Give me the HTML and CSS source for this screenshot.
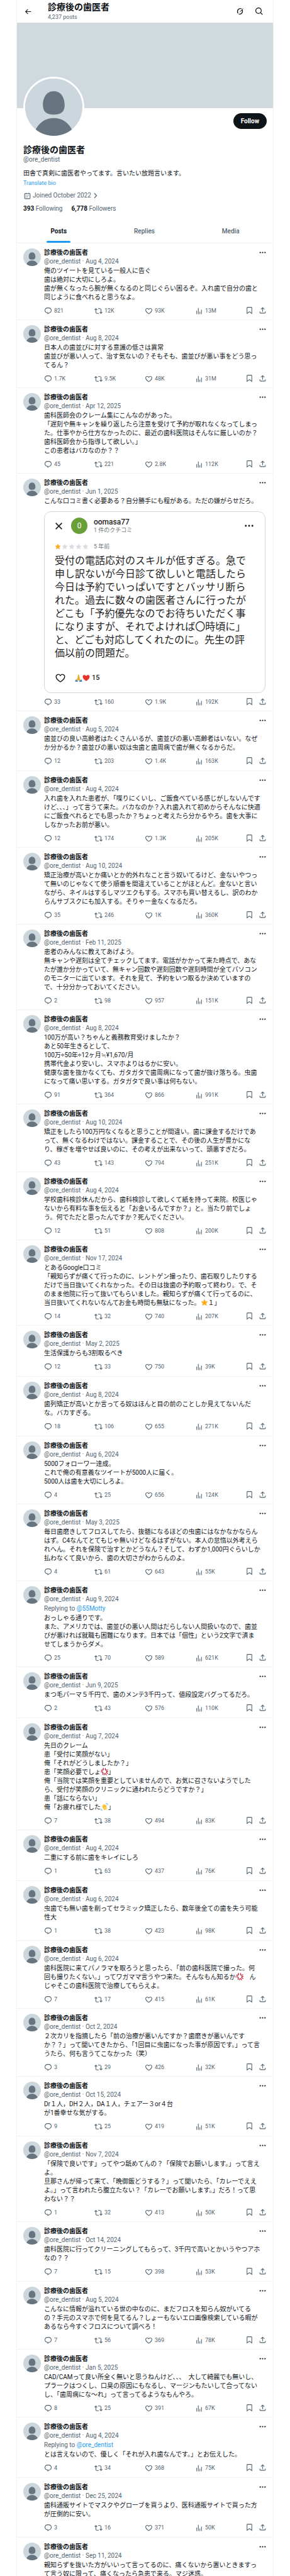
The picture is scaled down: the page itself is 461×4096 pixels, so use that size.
FILE: index.html
```
<!DOCTYPE html>
<html lang="ja">
<head>
    <meta charset="UTF-8">
    <meta name="viewport" content="width=device-width, initial-scale=1.0">
    <title>診療後の歯医者 (@ore_dentist)</title>
    <link rel="stylesheet" href="styles.css">
</head>
<body>
    <!-- Shared icons -->
    <svg class="sprite" aria-hidden="true">
        <symbol id="back" viewBox="0 0 24 24"><path d="M7.414 13l5.043 5.04-1.414 1.42L3.586 12l7.457-7.46 1.414 1.42L7.414 11H21v2H7.414z"/></symbol>
        <symbol id="grok" viewBox="0 0 24 24"><path d="M5.2 18.6C2.5 15.300 2.400 10.300 5 7C7.800 3.300 12.800 2.500 16.600 4.600L15 6.200C12.200 5 8.900 5.800 7 8.300C5.200 10.700 5.100 13.900 6.600 16.400C5.600 18.300 4 20.500 1 22.800C2.700 21.200 3.900 20 5.200 18.600zM8.800 14.900L18.200 7.600C19.900 11.300 19.200 15.800 16.200 18.500C13.600 20.900 10 21.300 7.200 20L8.600 18.400C10.700 19 13.100 18.500 14.800 16.800C16.700 14.900 17.300 12.200 16.700 9.900zM8.600 15.200L22.500 1.200C20.500 4 19 5.700 18 8z"/></symbol>
        <symbol id="search" viewBox="0 0 24 24"><path d="M10.250 3.750c-3.590 0-6.500 2.910-6.500 6.500s2.910 6.500 6.500 6.500c1.795 0 3.419-.726 4.596-1.904 1.178-1.177 1.904-2.801 1.904-4.596 0-3.590-2.910-6.500-6.500-6.500zm-8.500 6.500c0-4.694 3.806-8.500 8.500-8.500s8.500 3.806 8.500 8.500c0 1.986-.682 3.815-1.824 5.262l4.781 4.781-1.414 1.414-4.781-4.781c-1.447 1.142-3.276 1.824-5.262 1.824-4.694 0-8.500-3.806-8.500-8.500z"/></symbol>
        <symbol id="calendar" viewBox="0 0 24 24"><path d="M7 4V3h2v1h6V3h2v1h1.500C19.890 4 21 5.120 21 6.500v12c0 1.380-1.110 2.500-2.500 2.500h-13C4.120 21 3 19.880 3 18.500v-12C3 5.120 4.120 4 5.500 4H7zm0 2H5.500c-.27 0-.5.22-.5.5v12c0 .28.23.5.5.5h13c.28 0 .5-.22.5-.5v-12c0-.28-.22-.5-.5-.5H17v1h-2V6H9v1H7V6zm0 6h2v-2H7v2zm0 4h2v-2H7v2zm4-4h2v-2h-2v2zm0 4h2v-2h-2v2zm4-4h2v-2h-2v2z"/></symbol>
        <symbol id="chevron" viewBox="0 0 12 24"><path d="M2 4.500L9 12l-7 7.500" fill="none" stroke="currentColor" stroke-width="2.400"/></symbol>
        <symbol id="more" viewBox="0 0 24 24"><path d="M3 12c0-1.100.9-2 2-2s2 .9 2 2-.9 2-2 2-2-.9-2-2zm9 2c1.100 0 2-.9 2-2s-.9-2-2-2-2 .9-2 2 .9 2 2 2zm7 0c1.100 0 2-.9 2-2s-.9-2-2-2-2 .9-2 2 .9 2 2 2z"/></symbol>
        <symbol id="reply" viewBox="0 0 24 24"><path d="M1.751 10c0-4.420 3.584-8 8.005-8h4.366c4.490 0 8.129 3.640 8.129 8.130 0 2.960-1.607 5.680-4.196 7.110l-8.054 4.460v-3.690h-.067c-4.490.1-8.183-3.510-8.183-8.010zm8.005-6c-3.317 0-6.005 2.690-6.005 6 0 3.370 2.770 6.080 6.138 6.010l.351-.01h1.761v2.300l5.087-2.810c1.951-1.080 3.163-3.130 3.163-5.360 0-3.390-2.744-6.130-6.129-6.130H9.756z"/></symbol>
        <symbol id="repost" viewBox="0 0 24 24"><path d="M4.500 3.880l4.432 4.140-1.364 1.460L5.500 7.550V16c0 1.100.896 2 2 2H13v2H7.500c-2.209 0-4-1.790-4-4V7.550L1.432 9.480.068 8.020 4.500 3.880zM16.500 6H11V4h5.500c2.209 0 4 1.790 4 4v8.450l2.068-1.930 1.364 1.460-4.432 4.140-4.432-4.140 1.364-1.460 2.068 1.930V8c0-1.100-.896-2-2-2z"/></symbol>
        <symbol id="like" viewBox="0 0 24 24"><path d="M16.697 5.500c-1.222-.06-2.679.51-3.890 2.160l-.805 1.090-.806-1.090C9.984 6.010 8.526 5.440 7.304 5.500c-1.243.07-2.349.78-2.910 1.910-.552 1.120-.633 2.780.479 4.820 1.074 1.970 3.257 4.270 7.129 6.610 3.870-2.340 6.052-4.640 7.126-6.610 1.111-2.040 1.030-3.700.477-4.820-.561-1.130-1.666-1.840-2.908-1.910zm4.187 7.690c-1.351 2.480-4.001 5.120-8.379 7.670l-.503.3-.504-.3c-4.379-2.550-7.029-5.190-8.382-7.670-1.360-2.500-1.410-4.860-.514-6.670.887-1.790 2.647-2.910 4.601-3.010 1.651-.09 3.368.56 4.798 2.010 1.429-1.450 3.146-2.100 4.796-2.010 1.954.1 3.714 1.220 4.601 3.010.896 1.810.846 4.170-.514 6.670z"/></symbol>
        <symbol id="views" viewBox="0 0 24 24"><path d="M8.750 21V3h2v18h-2zM18 21V8.500h2V21h-2zM4 21l.004-10h2L6 21H4zm9.248 0v-7h2v7h-2z"/></symbol>
        <symbol id="bookmark" viewBox="0 0 24 24"><path d="M4 4.500C4 3.120 5.119 2 6.500 2h11C18.881 2 20 3.120 20 4.500v18.440l-8-5.710-8 5.710V4.500zM6.500 4c-.276 0-.5.22-.5.5v14.560l6-4.290 6 4.290V4.500c0-.28-.224-.5-.5-.5h-11z"/></symbol>
        <symbol id="share" viewBox="0 0 24 24"><path d="M12 2.590l5.700 5.700-1.410 1.420L13 6.410V16h-2V6.410l-3.300 3.300-1.410-1.420L12 2.590zM21 15l-.02 3.510c0 1.380-1.120 2.490-2.500 2.490H5.500C4.110 21 3 19.880 3 18.500V15h2v3.500c0 .28.22.5.5.5h12.980c.28 0 .5-.22.5-.5L19 15h2z"/></symbol>
        <symbol id="close" viewBox="0 0 24 24"><path d="M3 3l18 18M21 3L3 21" fill="none" stroke="currentColor" stroke-width="3"/></symbol>
        <symbol id="star" viewBox="0 0 24 24"><path d="M12 1l3.300 7.400 8 .8-6 5.400 1.800 8L12 18.400 4.900 22.600l1.800-8-6-5.400 8-.8z"/></symbol>
        <symbol id="person" viewBox="0 0 100 100">
            <rect width="100" height="100" fill="#ccd6dd"/>
            <path d="M50 22C63 22 69 34 69 46C69 58 63 63 50 63C37 63 31 58 31 46C31 34 37 22 50 22zM17 92C24 76 36 69 50 69C64 69 76 76 83 92V100H17z" fill="#66757f"/>
        </symbol>
        <symbol id="heart" viewBox="0 0 24 24"><path d="M12 22C5 17 1 12.500 1 7.800C1 1.500 9 .5 12 6C15 .5 23 1.500 23 7.800C23 12.500 19 17 12 22z" fill="#e8352c"/></symbol>
        <symbol id="pray" viewBox="0 0 24 24">
            <path d="M11.500 1C13 1 13.600 3 14 6L16 14L19 18L14 22L12 19L9 22L4 18L8 12L10 4C10.300 2 10.500 1 11.500 1z" fill="#f5b93c"/>
            <path d="M12 2V19" stroke="#c98316" stroke-width="1.200"/>
            <path d="M2 17L9 21V24H1zM22 17L14 21V24H23z" fill="#3d85c6"/>
        </symbol>
        <symbol id="anger" viewBox="0 0 24 24"><path d="M8 1.500C9.500 5 8.500 8 2 7.500M1.500 12.500C6 11 9 14 7 21M15 2C14 6 16 9.500 22 6M11.500 22C12.500 16 15 16.500 18 22.500M22.500 11C17 11.500 16 14 22.500 18" fill="none" stroke="#be1931" stroke-width="2.600" stroke-linecap="round"/></symbol>
        <symbol id="wave" viewBox="0 0 24 24">
            <path d="M4.500 9C4.500 7 6.500 7 7.500 8.500L7 5C7 3 9.500 3 10 5L11 4C12 2.500 14 3.500 14 5L15.500 8C16 6 19 6 18.500 9L19.500 15C20 19 17 22 13 22C9 22 7 18 4.500 9z" fill="#ffcc4d"/>
            <path d="M8 9l3 5M11 6l3 6M14 6l2 5" stroke="#e0912f" stroke-width="1" fill="none"/>
            <path d="M16 1.500C19 1.500 21 3.500 21.500 6.500M18.500 .8C21.500 1.200 23 3 23.300 5M1 17C1.500 20 3.500 22 6.500 22.500M.8 20C1.200 22 2.500 23.300 4.500 23.500" stroke="#5dadec" stroke-width="1.500" fill="none"/>
        </symbol>
    </svg>

    <main class="page">
        <header class="topbar">
            <button type="button" class="icon-btn" aria-label="Back"><svg class="icon"><use href="#back"/></svg></button>
            <div class="topbar-title">
                <h1>診療後の歯医者</h1>
                <p>4,237 posts</p>
            </div>
            <button type="button" class="icon-btn" aria-label="Profile summary"><svg class="icon icon-lg"><use href="#grok"/></svg></button>
            <button type="button" class="icon-btn" aria-label="Search"><svg class="icon icon-lg"><use href="#search"/></svg></button>
        </header>

        <div class="banner"></div>

        <section class="profile">
            <div class="profile-top">
                <svg class="profile-avatar" role="img" aria-label="診療後の歯医者"><use href="#person"/></svg>
                <button type="button" class="follow">Follow</button>
            </div>
            <h2>診療後の歯医者</h2>
            <p class="muted">@ore_dentist</p>
            <p class="bio">田舎で真剣に歯医者やってます。言いたい放題言います。</p>
            <button type="button" class="translate">Translate bio</button>
            <p class="joined muted"><svg class="icon"><use href="#calendar"/></svg>Joined October 2022 <svg class="chevron"><use href="#chevron"/></svg></p>
            <p class="follows">
                <a href="#following"><b>393</b> Following</a>
                <a href="#followers"><b>6,778</b> Followers</a>
            </p>
        </section>

        <nav class="tabs">
            <a href="#posts" class="active">Posts</a>
            <a href="#replies">Replies</a>
            <a href="#media">Media</a>
        </nav>

        <div id="timeline"></div>
    </main>

    <!-- Attached review, added under the post that has card: true -->
    <template id="reviewCard">
        <div class="card">
            <div class="card-head">
                <button type="button" class="icon-btn" aria-label="Close"><svg class="icon"><use href="#close"/></svg></button>
                <span class="card-avatar">0</span>
                <div class="card-user">
                    <p class="card-name">oomasa77</p>
                    <p class="card-sub">1 件のクチコミ</p>
                </div>
                <button type="button" class="icon-btn" aria-label="More"><svg class="icon icon-xl"><use href="#more"/></svg></button>
            </div>
            <div class="card-rating">
                <svg class="star star-on"><use href="#star"/></svg>
                <svg class="star"><use href="#star"/></svg>
                <svg class="star"><use href="#star"/></svg>
                <svg class="star"><use href="#star"/></svg>
                <svg class="star"><use href="#star"/></svg>
                <span class="card-sub">5 年前</span>
            </div>
            <p class="card-text">受付の電話応対のスキルが低すぎる。急で申し訳ないが今日診て欲しいと電話したら今日は予約でいっぱいですとバッサリ断られた。過去に数々の歯医者さんに行ったがどこも「予約優先なのでお待ちいただく事になりますが、それでよければ〇時頃に」と、どごも対応してくれたのに。先生の評価以前の問題だ。</p>
            <div class="card-foot">
                <button type="button" class="icon-btn" aria-label="Like"><svg class="icon icon-xl"><use href="#like"/></svg></button>
                <span class="reactions"><svg class="emoji"><use href="#pray"/></svg><svg class="emoji"><use href="#heart"/></svg></span>
                <b>15</b>
            </div>
        </div>
    </template>

    <script src="script.js"></script>
</body>
</html>
```
FILE: styles.css
```
* {
    box-sizing: border-box;
}

body {
    margin: 0;
    background-color: #ffffff;
    color: #0f1419;
    font-family: Roboto, "Noto Sans CJK JP", sans-serif;
    font-size: 10px;
    line-height: 14px;
}

h1, h2, p {
    margin: 0;
}

h1, h2 {
    font-size: 14px;
    line-height: 18px;
}

a {
    color: inherit;
    text-decoration: none;
}

button {
    padding: 0;
    border: none;
    background: none;
    color: inherit;
    font: inherit;
    cursor: pointer;
}

.sprite {
    position: absolute;
    width: 0;
    height: 0;
}

.page {
    max-width: 409px;
    max-height: 100vh;
    margin: 0 auto;
    overflow: hidden;
    border-left: 1px solid #eff3f4;
    border-right: 1px solid #eff3f4;
}

.muted {
    color: #536471;
}

.icon-btn {
    display: flex;
}

.icon {
    display: block;
    flex: none;
    width: 13px;
    height: 13px;
    fill: currentColor;
}

.icon-lg {
    width: 14px;
    height: 14px;
}

.icon-xl {
    width: 18px;
    height: 18px;
}

/* Top bar */
.topbar {
    display: flex;
    align-items: center;
    gap: 16px;
    height: 36px;
    padding: 0 15px 0 11px;
}

.topbar-title {
    flex: 1;
    margin-left: 9px;
}

.topbar-title p {
    color: #536471;
    font-size: 9px;
}

.banner {
    height: 136px;
    background-color: #cfd9de;
}

/* Profile */
.profile {
    padding: 8px 10px 11px;
}

.profile-top {
    display: flex;
    justify-content: space-between;
    align-items: flex-start;
    margin-bottom: 10px;
}

.profile-avatar {
    width: 97px;
    height: 97px;
    margin-top: -58px;
    border: 3px solid #ffffff;
    border-radius: 50%;
}

.follow {
    height: 25px;
    padding: 0 12px;
    border-radius: 13px;
    background-color: #0f1419;
    color: #ffffff;
    font-weight: bold;
}

.bio {
    margin-top: 8px;
}

.translate {
    display: block;
    margin-top: 1px;
    color: #1d9bf0;
    font-size: 9px;
}

.joined {
    display: flex;
    align-items: center;
    gap: 2px;
    margin-top: 6px;
}

.chevron {
    width: 6px;
    height: 12px;
    margin-left: 2px;
}

.follows {
    display: flex;
    gap: 14px;
    margin-top: 7px;
    color: #536471;
}

.follows b {
    color: #0f1419;
}

/* Tabs */
.tabs {
    display: flex;
    border-bottom: 1px solid #eff3f4;
    color: #536471;
    font-weight: 500;
}

.tabs a {
    display: flex;
    flex: 1 1 auto;
    justify-content: center;
    line-height: 36px;
}

.tabs .active {
    color: #0f1419;
    font-weight: bold;
}

.active::after {
    content: "";
    position: absolute;
    width: 38px;
    height: 3px;
    margin-top: 33px;
    border-radius: 2px;
    background-color: #1d9bf0;
}

/* Posts */
.post {
    display: flex;
    gap: 5px;
    padding: 8px 10px 7px;
    border-bottom: 1px solid #eff3f4;
}

.post-short {
    padding-bottom: 8px;
}

.post-avatar {
    flex: none;
    width: 28px;
    height: 28px;
    border-radius: 50%;
}

.post-body {
    flex: 1;
    min-width: 0;
}

.post-head {
    display: flex;
    justify-content: space-between;
}

.post-name {
    font-weight: bold;
}

.replying {
    margin-top: 1px;
    color: #536471;
}

.replying a {
    color: #1d9bf0;
}

.post-text {
    margin-top: 1px;
    padding-right: 10px;
    white-space: pre-line;
}

.emoji {
    width: 12px;
    height: 12px;
    vertical-align: -2px;
}

.actions {
    display: flex;
    gap: 8px;
    height: 14px;
    margin-top: 7px;
    color: #536471;
    font-size: 9px;
}

.counts {
    display: flex;
    flex: 1;
    margin-right: -8px;
}

.counts button {
    display: flex;
    flex: 1;
    align-items: center;
    gap: 3px;
}

/* Review card */
.card {
    margin: 9px 2px 0 0;
    padding: 9px 16px 14px;
    border: 1px solid #cfd9de;
    border-radius: 11px;
    color: #1f1f1f;
}

.card-head {
    display: flex;
    align-items: center;
}

.card-avatar {
    width: 26px;
    margin: 0 10px 0 13px;
    border-radius: 50%;
    background-color: #689f38;
    color: #ffffff;
    font-size: 12px;
    line-height: 26px;
    text-align: center;
}

.card-user {
    flex: 1;
}

.card-name {
    font-size: 12px;
    font-weight: 500;
}

.card-sub {
    color: #70757a;
    font-size: 9px;
    line-height: 12px;
}

.card-rating {
    display: flex;
    align-items: center;
    gap: 1px;
    margin: 14px 0 6px;
}

.card-rating .card-sub {
    margin-left: 7px;
}

.star {
    width: 10px;
    height: 10px;
    fill: #dadce0;
}

.star-on {
    fill: #fbab1f;
}

.card-text {
    padding-right: 8px;
    font-size: 16px;
    line-height: 21px;
}

.card-foot {
    display: flex;
    align-items: center;
    margin-top: 20px;
    font-size: 11px;
}

.card-foot b {
    font-weight: 500;
}

.reactions {
    display: flex;
    margin: 0 3px 0 14px;
}
```
FILE: script.js
```
const posts = [
    { date: 'Aug 4, 2024', counts: ['821', '12K', '93K', '13M'], text: '俺のツイートを見ている一般人に告ぐ\n歯は絶対に大切にしろよ。\n歯が無くなったら腕が無くなるのと同じぐらい困るぞ。入れ歯で自分の歯と同じように食べれると思うなよ。' },
    { date: 'Aug 8, 2024', counts: ['1.7K', '9.5K', '48K', '31M'], text: '日本人の歯並びに対する意識の低さは異常\n歯並びが悪い人って、治す気ないの？そもそも、歯並びが悪い事をどう思ってるん？' },
    { date: 'Apr 12, 2025', counts: ['45', '221', '2.8K', '112K'], text: '歯科医師会のクレーム集にこんなのがあった。\n「遅刻や無キャンを繰り返したら注意を受けて予約が取れなくなってしまった。仕事やから仕方なかったのに、最近の歯科医院はそんなに厳しいのか？歯科医師会から指導して欲しい。」\nこの患者はバカなのか？？' },
    { date: 'Jun 1, 2025', counts: ['33', '160', '1.9K', '192K'], card: true, text: 'こんな口コミ書く必要ある？自分勝手にも程がある。ただの嫌がらせだろ。' },
    { date: 'Aug 5, 2024', counts: ['12', '203', '1.4K', '163K'], short: true, text: '歯並びの良い高齢者はたくさんいるが、歯並びの悪い高齢者はいない。なぜか分かるか？歯並びの悪い奴は虫歯と歯周病で歯が無くなるからだ。' },
    { date: 'Aug 4, 2024', counts: ['12', '174', '1.3K', '205K'], text: '入れ歯を入れた患者が、「喋りにくいし、ご飯食べている感じがしないんですけど、、、」って言うて来た。バカなのか？入れ歯入れて初めからそんなに快適にご飯食べれるとでも思ったか？ちょっと考えたら分かるやろ。歯を大事にしなかったお前が悪い。' },
    { date: 'Aug 10, 2024', counts: ['35', '246', '1K', '360K'], text: '矯正治療が高いとか痛いとか的外れなこと言う奴いてるけど、金ないやつって無いのじゃなくて使う順番を間違えていることがほとんど。金ないと言いながら、ネイルはするしマツエクもする。スマホも買い替えるし、訳のわからんサブスクにも加入する。そりゃー金なくなるだろ。' },
    { date: 'Feb 11, 2025', counts: ['2', '98', '957', '151K'], text: '患者のみんなに教えてあげよう。\n無キャンや遅刻は全てチェックしてます。電話がかかって来た時点で、あなたが誰か分かっていて、無キャン回数や遅刻回数や遅刻時間が全てパソコンのモニターに出ています。それを見て、予約をいつ取るか決めていますので、十分分かっておいてください。' },
    { date: 'Aug 8, 2024', counts: ['91', '364', '866', '991K'], text: '100万が高い？ちゃんと義務教育受けましたか？\nあと50年生きるとして、\n100万÷50年÷12ヶ月≒¥1,670/月\n携帯代金より安いし、スマホよりはるかに安い。\n健康な歯を抜かなくても、ガタガタで歯周病になって歯が抜け落ちる。虫歯になって痛い思いする。ガタガタで良い事は何もない。' },
    { date: 'Aug 10, 2024', counts: ['43', '143', '794', '251K'], text: '矯正をしたら100万円なくなると思うことが間違い。歯に課金するだけであって、無くなるわけではない。課金することで、その後の人生が豊かになり、稼ぎを増やせば良いのに、その考えが出来ないって、頭悪すぎだろ。' },
    { date: 'Aug 4, 2024', counts: ['12', '51', '808', '200K'], text: '学校歯科検診休んだから、歯科検診して欲しくて紙を持って来院。校医じゃないから有料な事を伝えると「お金いるんですか？」と。当たり前でしょう。何でただと思ったんですか？死んでください。' },
    { date: 'Nov 17, 2024', counts: ['14', '32', '740', '207K'], text: 'とあるGoogle口コミ\n「親知らずが痛くて行ったのに、レントゲン撮ったり、歯石取りしたりするだけで当日抜いてくれなかった。その日は抜歯の予約取って終わり。で、そのまま他院に行って抜いてもらいました。親知らずが痛くて行ってるのに、当日抜いてくれないなんてお金も時間も無駄になった。⭐１」' },
    { date: 'May 2, 2025', counts: ['12', '33', '750', '39K'], short: true, text: '生活保護からも3割取るべき' },
    { date: 'Aug 8, 2024', counts: ['18', '106', '655', '271K'], short: true, text: '歯列矯正が高いとか言ってる奴はほんと目の前のことしか見えてないんだな。バカすぎる。' },
    { date: 'Aug 6, 2024', counts: ['4', '25', '656', '124K'], text: '5000フォローワー達成。\nこれで俺の有意義なツイートが5000人に届く。\n5000人は歯を大切にしろよ。' },
    { date: 'May 3, 2025', counts: ['4', '61', '643', '55K'], text: '毎日歯磨きしてフロスしてたら、抜髄になるほどの虫歯にはなかなかならんはず。C4なんてとてもじゃ無いけどなるはずがない。本人の怠惰以外考えられへん。それを保険で治すとかどうなん？そして、わずか1,000円ぐらいしか払わなくて良いから、歯の大切さがわからんのよ。' },
    { date: 'Aug 9, 2024', counts: ['25', '70', '589', '621K'], replyTo: '@55Motty', text: 'おっしゃる通りです。\nまた、アメリカでは、歯並びの悪い人間はだらしない人間扱いなので、歯並びが悪ければ就職も困難になります。日本では「個性」という2文字で済ませてしまうからダメ。' },
    { date: 'Jun 9, 2025', counts: ['2', '43', '576', '110K'], short: true, text: 'まつ毛パーマ５千円で、歯のメンテ3千円って、値段設定バグってるだろ。' },
    { date: 'Aug 7, 2024', counts: ['7', '38', '494', '83K'], text: '先日のクレーム\n患「受付に笑顔がない」\n俺「それがどうしましたか？」\n患「笑顔必要でしょ💢」\n俺「当院では笑顔を重要としていませんので、お気に召さないようでしたら、受付が笑顔のクリニックに通われたらどうですか？」\n患「話にならない」\n俺「お疲れ様でした👋」' },
    { date: 'Aug 4, 2024', counts: ['1', '63', '437', '76K'], short: true, text: '二重にする前に歯をキレイにしろ' },
    { date: 'Aug 6, 2024', counts: ['1', '38', '423', '98K'], short: true, text: '虫歯でも無い歯を削ってセラミック矯正したら、数年後全ての歯を失う可能性大' },
    { date: 'Aug 6, 2024', counts: ['7', '17', '415', '61K'], text: '歯科医院に来てパノラマを取ろうと思ったら、「前の歯科医院で撮った。何回も撮りたくない。」ってワガママ言うやつ来た。そんなもん知るか💢　んじゃそこの歯科医院で治療してもらえよ。' },
    { date: 'Oct 2, 2024', counts: ['3', '29', '426', '32K'], text: '２次カリを指摘したら「前の治療が悪いんですか？歯磨きが悪いんですか？？」って聞いてきたから、「1回目に虫歯になった事が原因です。」って言うたら、何も言うてこなかった（笑）' },
    { date: 'Oct 15, 2024', counts: ['9', '25', '419', '51K'], short: true, text: 'Dr１人，DH２人，DA１人，チェアー３or４台\nが1番幸せな気がする。' },
    { date: 'Nov 7, 2024', counts: ['1', '32', '413', '50K'], text: '「保険で良いです」ってやつ舐めてんの？「保険でお願いします。」って言えよ。\n旦那さんが帰って来て、「晩御飯どうする？」って聞いたら、「カレーでええよ。」って言われたら腹立たない？「カレーでお願いします。」だろ！って思わない？？' },
    { date: 'Oct 14, 2024', counts: ['7', '15', '398', '53K'], short: true, text: '歯科医院に行ってクリーニングしてもらって、3千円で高いとかいうやつアホなの？？' },
    { date: 'Aug 5, 2024', counts: ['7', '56', '369', '78K'], text: 'こんなに情報が溢れている世の中なのに、まだフロスを知らん奴がいてるの？手元のスマホで何を見てるん？しょーもないエロ画像検索している暇があるなら今すぐフロスについて調べろ！' },
    { date: 'Jan 5, 2025', counts: ['8', '25', '391', '67K'], text: 'CAD/CAMって良い所全く無いと思うねんけど、、、　大して綺麗でも無いし、プラークはつくし、口臭の原因にもなるし、マージンもたいして合ってないし、「歯周病にな〜れ」って言ってるようなもんやろ。' },
    { date: 'Aug 4, 2024', counts: ['4', '34', '368', '75K'], short: true, replyTo: '@ore_dentist', text: 'とは言えないので、優しく「それが入れ歯なんです。」とお伝えした。' },
    { date: 'Dec 25, 2024', counts: ['3', '16', '371', '50K'], short: true, text: '歯科通販サイトでマスクやグローブを買うより、医科通販サイトで買った方が圧倒的に安い。' },
    { date: 'Sep 11, 2024', text: '親知らずを抜いた方がいいって言ってるのに、痛くないから置いときますって言う奴に限って、痛くなったら急患で来る。マジ迷惑。' }
];

const actions = [['reply', 'Reply'], ['repost', 'Repost'], ['like', 'Like'], ['views', 'Views']];
const emojis = { '⭐': 'star', '💢': 'anger', '👋': 'wave' };

function icon(name) {
    return `<svg class="icon"><use href="#${name}"/></svg>`;
}

function formatText(text) {
    return text.replace(/⭐|💢|👋/gu, e => `<svg class="emoji star-on" role="img" aria-label="${e}"><use href="#${emojis[e]}"/></svg>`);
}

function renderActions(values) {
    const counts = actions.map(([name, label], i) =>
        `<button type="button" aria-label="${label}">${icon(name)}${values[i]}</button>`).join('');

    return `
        <div class="actions">
            <div class="counts">${counts}</div>
            <button type="button" class="icon-btn" aria-label="Bookmark">${icon('bookmark')}</button>
            <button type="button" class="icon-btn" aria-label="Share">${icon('share')}</button>
        </div>`;
}

function renderPost(post) {
    const card = post.card ? document.getElementById('reviewCard').innerHTML : '';
    const reply = post.replyTo ? `<p class="replying">Replying to <a href="#">${post.replyTo}</a></p>` : '';

    return `
        <article class="post${post.short ? ' post-short' : ''}">
            <svg class="post-avatar" aria-hidden="true"><use href="#person"/></svg>
            <div class="post-body">
                <div class="post-head">
                    <span class="post-name">診療後の歯医者</span>
                    <button type="button" class="icon-btn" aria-label="More">${icon('more')}</button>
                </div>
                <div class="muted">@ore_dentist · ${post.date}</div>
                ${reply}
                <p class="post-text">${formatText(post.text)}</p>
                ${card}
                ${post.counts ? renderActions(post.counts) : ''}
            </div>
        </article>`;
}

document.getElementById('timeline').innerHTML = posts.map(renderPost).join('');
```
